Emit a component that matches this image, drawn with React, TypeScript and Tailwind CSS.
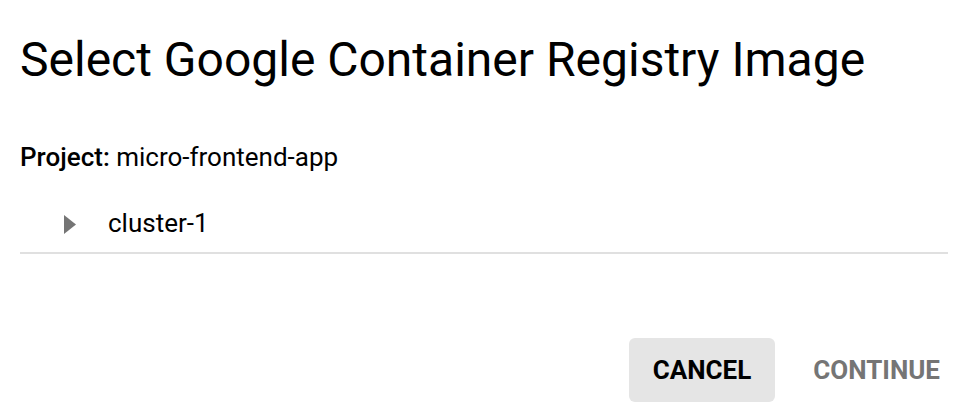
import React from 'react';

const TreeArrow: React.FC = () => (
  <svg width="12" height="19" viewBox="0 0 12 19" className="mt-[8px] shrink-0">
    <path d="M0 0 L12 9.5 L0 19 Z" fill="#757575" />
  </svg>
);

export default function App() {
  return (
    <div className="w-[964px] h-[406px] bg-white text-black font-['Roboto',sans-serif] overflow-hidden">
      <div className="pt-[32px] px-[20px]">
        <h1 className="text-[48px] leading-[56px] font-normal">Select Google Container Registry Image</h1>

        <div className="mt-[53px] text-[26px] leading-[32px]">
          <span className="font-medium">Project:</span> micro-frontend-app
        </div>

        <div className="mt-[34px] mr-[-4px] pb-[13px] border-b-2 border-[#e0e0e0]">
          <div className="flex items-start pl-[44px] gap-[32px]">
            <TreeArrow />
            <span className="text-[26px] leading-[32px]">cluster-1</span>
          </div>
        </div>
      </div>

      <div className="mt-[84px] flex justify-end gap-[14px]">
        <button className="h-[64px] px-[24px] rounded-[6px] bg-[#e5e5e5] text-[26px] font-bold text-black">
          CANCEL
        </button>
        <button className="h-[64px] px-[24px] rounded-[6px] text-[26px] font-bold text-[#757575]">
          CONTINUE
        </button>
      </div>
    </div>
  );
}
